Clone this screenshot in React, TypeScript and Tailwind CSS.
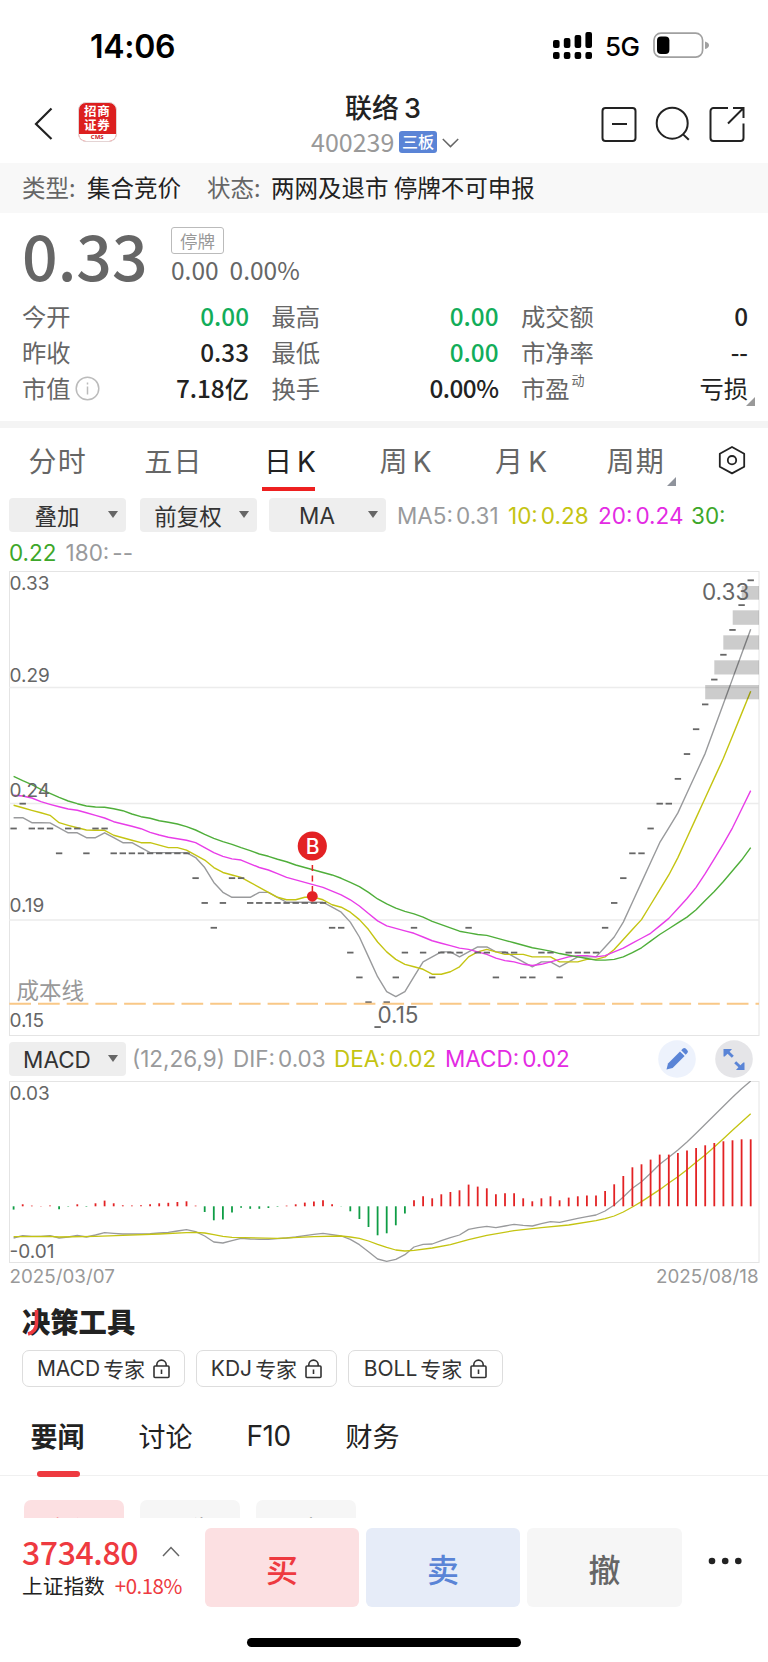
import clsx from "clsx";

// Price level of each daily bar: 0 = 0.33, 18 = 0.15
const levels = [
  10, 9, 10, 10, 10, 11, 10, 10, 11, 10, 10, 11, 11, 11, 11, 11, 11, 11, 11, 11,
  12, 13, 14, 13, 12, 12, 13, 13, 13, 13, 13, 13, 13, 13, 13, 14, 14, 15, 16, 17,
  18, 17, 16, 15, 14, 15, 16, 15, 15, 15, 14, 15, 15, 16, 15, 15, 16, 16, 15, 15,
  16, 15, 15, 15, 15, 14, 13, 12, 11, 11, 10, 9, 9, 8, 7, 6, 5, 4, 3, 2, 1, 0,
];

// Averages for the first days, whose window starts before the visible range
const lead5 = [817.7, 817.7, 822.7, 822.7];
const lead10 = [805.3, 807.7, 810.3, 812.7, 815.3, 822.7, 825.3, 827.7, 830];
const lead20 = [
  795.3, 796, 798, 801.7, 804.3, 806.7, 809, 810.3, 812.7, 815.3, 818, 821.7, 824,
  826.3, 828.7, 832.3, 835, 837.3, 838.7,
];
const lead30 = [
  776.3, 780.7, 784.7, 789.3, 793.3, 797.3, 801, 803.7, 806, 807, 807.3, 808.7,
  810.7, 814, 816.7, 818.3, 820.7, 822.3, 824, 826.7, 830, 834.3, 838.3, 841.7,
  844.3, 847.7, 850.7, 854, 856.3,
];

const histogram = [
  -3.3, 2, 0.7, 0.3, 0.7, -3, -0.4, 2, -0.5, 3, 5.7, 3, 1, 0.7, 1, 2, 3, 3.5, 4.3, 5,
  0.7, -5.7, -14, -13.3, -6.3, -1.5, -2.5, -2.5, -1.7, -0.5, 0.7, 2, 3.7, 4.7, 6, 2,
  -0.2, -5, -12.7, -20.7, -29, -27, -19, -7.3, 6, 10, 8, 12, 14.3, 16, 21.7, 19.7,
  18, 12, 13, 13, 8, 5, 8, 10, 6, 8.7, 10, 10.7, 10.7, 15.3, 22, 30.3, 39, 42, 46.7,
  51.7, 51.7, 53.3, 55.7, 58.3, 61, 63.3, 65, 66, 67, 67,
];

const dif = [
  609, 602, 604, 604, 602, 609, 606, 601, 606, 600, 593, 595, 597, 597, 597, 596,
  594, 592, 588, 584, 590, 603, 621, 624, 617, 610, 612, 613, 613, 611, 609, 606,
  602, 598, 595, 599, 603, 613, 629, 650, 672, 679, 673, 659, 636, 628, 627, 617,
  608, 600, 583, 578, 574, 578, 573, 568, 571, 573, 566, 560, 562, 556, 550, 545,
  540, 528, 510, 486, 460, 440, 415, 388, 367, 345, 321, 295, 268, 241, 214, 187,
  161, 138,
];

const dea: [number, number][] = [
  [0, 605], [4, 604], [5, 606], [9, 604], [12, 601], [16, 597], [19, 593], [20, 592],
  [21, 594], [22, 599], [23, 604], [24, 607], [29, 610], [33, 605], [36, 603],
  [37, 606], [38, 610], [39, 618], [40, 628], [41, 637], [42, 645], [43, 648],
  [44, 646], [46, 639], [48, 629], [50, 614], [52, 601], [55, 587], [58, 578],
  [61, 570], [64, 557], [65, 551], [66, 543], [67, 531], [68, 516], [69, 500],
  [70, 482], [71, 464], [72, 444], [73, 425], [74, 404], [75, 382], [76, 360],
  [77, 336], [78, 311], [79, 286], [80, 261], [81, 236],
];

const dayX = (i: number) => 13.6 + i * 9.1;
const levelY = (k: number) => 580.3 + k * 24.82;
const macdY = (v: number) => 1035 + v / 3;

const average = (size: number, lead: number[]) =>
  levels
    .map((_, i) => {
      if (i < size - 1) return `${dayX(i)},${lead[i]}`;
      const slice = levels.slice(i - size + 1, i + 1);
      const mean = slice.reduce((a, b) => a + b, 0) / size;
      return `${dayX(i)},${levelY(mean) - 0.7}`;
    })
    .join(" ");

const averages = [
  { points: average(5, lead5), color: "#999a9c" },
  { points: average(10, lead10), color: "#c4c412" },
  { points: average(20, lead20), color: "#e83de8" },
  { points: average(30, lead30), color: "#4fae3a" },
];

const gaps = [
  [741.7, 586, 13.7],
  [732.7, 610.3, 14.5],
  [723.3, 635.3, 14.3],
  [714.3, 660.3, 14.2],
  [705.2, 685, 14.3],
];

const StatusBar = () => (
  <div className="h-[82px] flex items-start pl-[90px] pr-[58px] font-['Inter',sans-serif] text-black">
    <span className="w-[90px] mt-[27px] text-[32px] leading-[39px] font-semibold tracking-[-0.300px]">14:06</span>
    <svg className="ml-auto mt-[32px]" width="40" height="27" viewBox="0 0 40 27">
      {[8, 6, 3, 0].map((top, i) => (
        <g key={top}>
          <rect x={i * 10.8} y={top} width="6.6" height={16 - top} rx="2" />
          <rect x={i * 10.8} y="20" width="6.6" height="7" rx="2" />
        </g>
      ))}
    </svg>
    <span className="ml-[12px] mt-[31px] w-[36px] text-[26px] leading-[32px] font-medium tracking-[-0.600px]">5G</span>
    <svg className="ml-[12px] mt-[32px]" width="57" height="27" viewBox="0 0 57 27">
      <rect x="1" y="1.2" width="48.6" height="24" rx="7" fill="none" stroke="#a0a0a0" strokeWidth="1.7" />
      <rect x="4" y="4.6" width="12.4" height="17.4" rx="4" />
      <path d="M52 9.500c2.600.700 4 2 4 3.800s-1.400 3.100-4 3.800z" fill="#a0a0a0" />
    </svg>
  </div>
);

const Header = () => (
  <header className="h-[81px] flex items-start">
    <svg className="ml-[33px] mt-[24px]" width="20" height="34" viewBox="0 0 20 34" fill="none" stroke="#222" strokeWidth="2.200">
      <path d="M18.500 2.500 3 18 18.500 33" />
    </svg>
    <div className="ml-[24.500px] mt-[20px] w-[39.500px] h-[40px] rounded-[8px] overflow-hidden border border-[#e4d4d4] bg-[#dc1f1f] text-white flex flex-col items-center">
      <span className="mt-[1px] h-[14px] text-[12.500px] leading-[14px] font-bold tracking-[0.800px]">招商</span>
      <span className="h-[14px] text-[12.500px] leading-[14px] font-bold tracking-[0.800px]">证券</span>
      <span className="mt-auto w-full h-[7px] bg-white text-[#c22] text-[6px] leading-[6px] font-bold text-center font-['Open_Sans',sans-serif]">CMS</span>
    </div>
    <div className="w-[394px] pl-[22px] flex flex-col">
      <div className="ml-[206px] mt-[9px] text-[27px] leading-[32px] text-[#222] font-medium whitespace-nowrap">
        联络<span className="ml-[5px] font-['Inter',sans-serif]">3</span>
      </div>
      <div className="ml-[172px] mt-[5px] flex items-center h-[26px]">
        <span className="-mt-[4px] w-[84px] text-[25px] leading-[26px] text-[#999]">400239</span>
        <span className="ml-[4px] -mt-[2px] w-[38px] h-[22px] rounded-[3px] bg-[#5a84d6] text-white text-[16px] leading-[21px] text-center font-medium">三板</span>
        <svg className="ml-[5px]" width="17" height="10" viewBox="0 0 17 10" fill="none" stroke="#666" strokeWidth="1.500">
          <path d="m.8 1 7.700 7.600L16.200 1" />
        </svg>
      </div>
    </div>
    <div className="ml-auto mr-[23px] mt-[24px] flex gap-[18px]">
      <svg width="36" height="36" viewBox="0 0 36 36" fill="none" stroke="#222" strokeWidth="2">
        <rect x="1.500" y="2" width="33" height="33" rx="3" />
        <path d="M11 18h15" />
      </svg>
      <svg width="36" height="36" viewBox="0 0 36 36" fill="none" stroke="#222" strokeWidth="2">
        <circle cx="17.200" cy="17.200" r="15.500" />
        <path d="m27.800 28.100 6 5.700" />
      </svg>
      <svg width="36" height="36" viewBox="0 0 36 36" fill="none" stroke="#222" strokeWidth="2">
        <path d="M19 2H4.500a3 3 0 0 0-3 3v27a3 3 0 0 0 3 3h27a3 3 0 0 0 3-3V17.500M24 2h10.500v10M34 2.500 19 17.500" />
      </svg>
    </div>
  </header>
);

const stats = [
  [["今开", "0.00", true], ["最高", "0.00", true], ["成交额", "0", false]],
  [["昨收", "0.33", false], ["最低", "0.00", true], ["市净率", "--", false]],
  [["市值", "7.18亿", false], ["换手", "0.00%", false], ["市盈", "亏损", false]],
] as [string, string, boolean][][];

const Quote = () => (
  <section className="relative h-[208px] pt-[14px]">
    <div className="flex h-[70px] pl-[22px]">
      <span className="w-[149px] text-[62.500px] leading-[54px] font-medium text-[#666]">0.33</span>
      <div className="flex flex-col">
        <span className="w-[53px] h-[27px] border border-[#bbb] rounded-[3px] text-[17.500px] leading-[25px] text-center text-[#999]">停牌</span>
        <span className="mt-[2px] text-[24.500px] leading-[28px] text-[#666] whitespace-pre"><span className="mr-[11px]">0.00</span>0.00%</span>
      </div>
    </div>
    <div className="mt-px pl-[22px] pr-[20px] flex flex-col">
      {stats.map((row, r) => (
        <div key={r} className="grid grid-cols-3 gap-[22.500px] h-[36px]">
          {row.map(([label, value, up]) => (
            <div key={label} className="flex items-center text-[24.300px] leading-[36px] text-[#666] whitespace-nowrap">
              <span>{label}</span>
              {label === "市值" && (
                <svg className="ml-[4px]" width="25" height="25" viewBox="0 0 25 25" fill="none" stroke="#bbb" strokeWidth="1.500">
                  <circle cx="12.500" cy="12.500" r="11.300" />
                  <path d="M12.500 10.500v8M12.500 6.500v2" />
                </svg>
              )}
              {label === "市盈" && <sup className="ml-[2px] -top-[9px] text-[13px] leading-none">动</sup>}
              <span className={clsx("ml-auto", up ? "text-[#12ad5a]" : "text-[#222]", /\d|-/.test(value) && "font-medium", value.includes("%") && "tracking-[-0.500px]")}>{value}</span>
            </div>
          ))}
        </div>
      ))}
    </div>
    <svg className="absolute right-[13px] top-[184px]" width="9" height="9" viewBox="0 0 9 9" fill="#999">
      <path d="M9 0v9H0z" />
    </svg>
  </section>
);

const periods = ["分时", "五日", "日K", "周K", "月K", "周期"];

const PeriodTabs = () => (
  <nav className="flex h-[70px]">
    {periods.map((p) => {
      const active = p === "日K";
      return (
        <div key={p} className={clsx("relative w-[115.600px] flex flex-col items-center text-[28px] leading-[40px]", active ? "text-[#222]" : "text-[#666]")}>
          <span className={clsx("mt-[12px] h-[40px] tracking-[1.200px]", p[1] === "K" && "pl-[3px]")}>
            {p[0]}
            {p[1] === "K" ? <span className="ml-[4px] font-['Inter',sans-serif]">K</span> : p[1]}
          </span>
          {active && <span className="mt-[7px] h-[4px] w-[53px] bg-[#ee2020]" />}
          {p === "周期" && (
            <svg className="absolute left-[89px] top-[49px]" width="9" height="9" viewBox="0 0 9 9" fill="#8f939c">
              <path d="M9 0v9H0z" />
            </svg>
          )}
        </div>
      );
    })}
    <svg className="ml-[24px] mt-[17px]" width="28" height="30" viewBox="0 0 28 30" fill="none" stroke="#222" strokeWidth="1.800" strokeLinejoin="round">
      <path d="M14 2 26.200 8.700v13L14 28.400 1.800 21.700v-13z" />
      <circle cx="14" cy="15.200" r="4.200" />
    </svg>
  </nav>
);

const Dropdown = ({ label, latin }: { label: string; latin?: boolean }) => (
  <button className="relative w-[117px] h-[34px] shrink-0 rounded-[4px] bg-[#eee] text-[#333] text-[22.500px]">
    <span className={clsx("block pr-[21px]", latin ? "leading-[35px] font-['Inter',sans-serif]" : "leading-[32px]")}>{label}</span>
    <svg className="absolute right-[8px] top-[13px]" width="10" height="7" viewBox="0 0 10 7" fill="#666">
      <path d="M0 0h10L5 7z" />
    </svg>
  </button>
);

const PriceChart = () => (
  <svg className="block font-['Inter','Noto_Sans_CJK_SC',sans-serif]" width="768" height="466" viewBox="0 571 768 466" fill="none">
    <rect x="9.500" y="571.500" width="749.500" height="464" stroke="#e4e4e4" />
    <path d="M9 687.500h750M9 803.500h750M9 920h750" stroke="#ececec" strokeWidth="1.300" />
    {averages.map((a) => (
      <polyline key={a.color} points={a.points} stroke={a.color} strokeWidth="1.400" strokeLinejoin="round" />
    ))}
    {levels.map((k, i) => (
      <path key={i} d={`M${dayX(i) - 3.2} ${levelY(k)}h6.400`} stroke="#666" strokeWidth="1.800" />
    ))}
    {gaps.map(([x, y, h]) => (
      <rect key={x} x={x} y={y} width={759 - x} height={h} fill="#000" fillOpacity="0.200" />
    ))}
    <path d="M9.300 1003.800H759" stroke="#f9c887" strokeWidth="2" strokeDasharray="21.700 7" />
    <path d="M312.400 865v26" stroke="#e32224" strokeWidth="1.500" strokeDasharray="6 4.500" />
    <circle cx="312.300" cy="896.300" r="5.400" fill="#e32224" />
    <circle cx="312.300" cy="846" r="14.600" fill="#e32224" />
    <text x="312.600" y="854" fontSize="21" fontWeight="500" fill="#fff" textAnchor="middle">B</text>
    <g fill="#666" fontSize="19">
      <text x="9.500" y="590.300">0.33</text>
      <text x="9.500" y="682">0.29</text>
      <text x="9.500" y="797">0.24</text>
      <text x="9.500" y="912">0.19</text>
      <text x="9.500" y="1026.700">0.15</text>
    </g>
    <g fill="#666" fontSize="22.500">
      <text x="702" y="599.500">0.33</text>
      <text x="377.500" y="1022.500">0.15</text>
    </g>
    <text x="16.500" y="998.500" fontSize="22.500" fill="#999">成本线</text>
  </svg>
);

const MacdChart = () => (
  <svg className="block font-['Inter',sans-serif]" width="768" height="210" viewBox="0 1081 768 210" fill="none">
    <rect x="9.500" y="1081.500" width="749.500" height="181" stroke="#e4e4e4" />
    <polyline points={dif.map((v, i) => `${dayX(i)},${macdY(v)}`).join(" ")} stroke="#999a9c" strokeWidth="1.300" strokeLinejoin="round" />
    <polyline points={dea.map(([i, v]) => `${dayX(i)},${macdY(v)}`).join(" ")} stroke="#c4c412" strokeWidth="1.300" strokeLinejoin="round" />
    {histogram.map((h, i) => (
      <path key={i} d={`M${dayX(i)} 1206.300v${-h}`} stroke={h > 0 ? "#e32224" : "#0f9d45"} strokeWidth="1.800" />
    ))}
    <g fontSize="19" fill="#666">
      <text x="9.500" y="1099.700">0.03</text>
      <text x="9.500" y="1258">-0.01</text>
    </g>
    <g fontSize="18.800" fill="#999">
      <text x="9.500" y="1283">2025/03/07</text>
      <text x="758.500" y="1283" textAnchor="end">2025/08/18</text>
    </g>
  </svg>
);

const Lock = () => (
  <svg className="ml-[8px]" width="17" height="20" viewBox="0 0 17 20" fill="none" stroke="#333" strokeWidth="1.600">
    <rect x="1" y="7" width="15" height="11.500" rx="1" />
    <path d="M3.800 7V5.800a4.700 4.700 0 0 1 9.400 0V7M8.500 10.500v4.500" />
  </svg>
);

const experts = [
  { name: "MACD", className: "w-[163px]" },
  { name: "KDJ", className: "w-[141px]" },
  { name: "BOLL", className: "w-[155px]" },
];

const Tools = () => (
  <section className="h-[104px] pl-[22px] pt-[11px]">
    <h2 className="relative h-[38px] text-[28.300px] leading-[38px] font-black text-[#222]">
      决策工具
      {/* red stroke of the wordmark */}
      <svg className="absolute left-[4px] top-[7px]" width="16" height="28" viewBox="0 0 16 28" fill="none" stroke="#ee3a40" strokeWidth="3.600">
        <path d="M10.500 1v13c0 6.500-3 9.500-8.500 11" />
      </svg>
    </h2>
    <div className="mt-[10px] flex gap-[11px]">
      {experts.map((e) => (
        <div key={e.name} className={clsx("h-[37px] shrink-0 flex items-center justify-center rounded-[7px] border border-[#ddd] text-[21px] leading-[35px] text-[#333]", e.className)}>
          <span className="font-['Inter',sans-serif] mr-[3px]">{e.name}</span>专家
          <Lock />
        </div>
      ))}
    </div>
  </section>
);

const News = () => (
  <section className="h-[123px]">
    <div className="relative h-[81px] border-b border-[#f0f0f0] flex pl-[30.500px] text-[27px] leading-[40px] text-[#222]">
      <span className="mt-[21px] w-[108px] font-bold">要闻</span>
      <span className="mt-[21px] w-[108px]">讨论</span>
      <span className="mt-[21px] w-[99px] text-[28px] font-['Inter',sans-serif] tracking-[-0.500px]">F10</span>
      <span className="mt-[21px]">财务</span>
      <span className="absolute left-[37px] bottom-[-2px] w-[43px] h-[6px] rounded-full bg-[#ee3a40]" />
    </div>
    <div className="mt-[24px] ml-[24px] h-[18px] overflow-hidden flex gap-[16px] text-[22px] leading-[28px] text-center">
      <span className="w-[100px] h-[40px] pt-[12px] rounded-[7px] bg-[#fce0e2] text-[#ee3a40]">新闻</span>
      <span className="w-[100px] h-[40px] pt-[12px] rounded-[7px] bg-[#f6f6f6] text-[#666]">公告</span>
      <span className="w-[100px] h-[40px] pt-[12px] rounded-[7px] bg-[#f6f6f6] text-[#666]">研报</span>
    </div>
  </section>
);

const TradeBar = () => (
  <footer className="relative h-[144px] pt-[10px] flex">
    <div className="w-[205px] pl-[22px] flex flex-col">
      <div className="flex items-start">
        <span className="mt-[3px] w-[118px] text-[32px] leading-[40px] font-medium tracking-[-0.400px] text-[#ee3a40] whitespace-nowrap">3734.80</span>
        <svg className="ml-[22px] mt-[18px]" width="18" height="11" viewBox="0 0 18 11" fill="none" stroke="#666" strokeWidth="1.500">
          <path d="m1 10 8-8.500 8 8.500" />
        </svg>
      </div>
      <div className="flex text-[20.700px] leading-[28px] text-[#222] whitespace-nowrap">
        上证指数<span className="ml-[10px] text-[20.500px] tracking-[-0.500px] text-[#ee3a40]">+0.18%</span>
      </div>
    </div>
    <div className="flex gap-[7px] text-[32px] leading-[78px] font-medium text-center">
      <button className="w-[154px] h-[79px] rounded-[6px] bg-[#fce0e2] text-[#ee3a40]">买</button>
      <button className="w-[154px] h-[79px] rounded-[6px] bg-[#e6ecf8] text-[#5a84d6]">卖</button>
      <button className="w-[155px] h-[79px] rounded-[6px] bg-[#f6f6f6] text-[#666]">撤</button>
    </div>
    <svg className="ml-[25px] mt-[29px]" width="36" height="8" viewBox="0 0 36 8" fill="#222">
      <circle cx="5" cy="4" r="3.300" />
      <circle cx="18.200" cy="4" r="3.300" />
      <circle cx="31.300" cy="4" r="3.300" />
    </svg>
    <span className="absolute left-[247px] bottom-[15px] w-[274px] h-[9px] rounded-full bg-black" />
  </footer>
);

export default function App() {
  return (
    <div className="w-[768px] h-[1662px] overflow-hidden bg-white font-['Noto_Sans_CJK_SC',sans-serif]">
      <StatusBar />
      <Header />
      <div className="h-[50px] bg-[#f8f8f8] pl-[22px] flex items-start text-[23.500px] leading-[48px] text-[#222] whitespace-nowrap">
        <span className="w-[65px] text-[#666]">类型:</span>
        <span className="w-[120px]">集合竞价</span>
        <span className="w-[64px] text-[#666]">状态:</span>
        <span>两网及退市 停牌不可申报</span>
      </div>
      <Quote />
      <div className="h-[7px] bg-[#f4f4f4]" />
      <PeriodTabs />

      <div className="h-[73px] pl-[9px] font-['Inter',sans-serif] text-[22.500px]">
        <div className="flex items-start leading-[35px] whitespace-nowrap">
          <div className="flex font-['Noto_Sans_CJK_SC',sans-serif]">
            <Dropdown label="叠加" />
            <span className="w-[14px]" />
            <Dropdown label="前复权" />
            <span className="w-[12px]" />
            <Dropdown label="MA" latin />
          </div>
          <span className="ml-[11px] w-[111px] text-[#999a9c]">MA5:<span className="ml-[3px]">0.31</span></span>
          <span className="w-[90px] text-[#c4c412]">10:<span className="ml-[3px]">0.28</span></span>
          <span className="w-[93px] text-[#e32be3]">20:<span className="ml-[3px]">0.24</span></span>
          <span className="text-[#3da72a]">30:</span>
        </div>
        <div className="mt-[2px] leading-[35px]">
          <span className="text-[#3da72a]">0.22</span>
          <span className="ml-[9px] text-[#999a9c]">180:<span className="ml-[3px]">--</span></span>
        </div>
      </div>

      <PriceChart />

      <div className="h-[44px] pt-[5px] pl-[9px] pr-[15px] flex items-start font-['Inter',sans-serif] text-[22.500px] leading-[34px] whitespace-nowrap">
        <Dropdown label="MACD" latin />
        <span className="ml-[6px] w-[101px] text-[#999a9c]">(12,26,9)</span>
        <span className="w-[101px] text-[#999a9c]">DIF:<span className="ml-[3px]">0.03</span></span>
        <span className="w-[111px] text-[#c4c412]">DEA:<span className="ml-[3px]">0.02</span></span>
        <span className="text-[#e32be3]">MACD:<span className="ml-[3px]">0.02</span></span>
        <div className="ml-auto -mt-[2px] flex gap-[19px]">
          <svg width="38" height="38" viewBox="0 0 38 38">
            <circle cx="19" cy="19" r="18.800" fill="#edf2fc" />
            <g fill="#5a84d6">
              <path d="M8.500 29.500 10 23.500 22 11.500l4.600 4.600-12 12z" />
              <path d="m23.200 10.300 1.700-1.700a2 2 0 0 1 2.800 0l1.600 1.600a2 2 0 0 1 0 2.800l-1.600 1.700z" />
            </g>
          </svg>
          <svg width="38" height="38" viewBox="0 0 38 38">
            <circle cx="19" cy="19" r="18.800" fill="#e5e5e8" />
            <g fill="#5a84d6">
              <path d="M8.500 9H17l-2.400 2.700 4.200 4.100-2 2-4.200-4.100-2.900 2.800H8.500z" />
              <path d="M29.500 30H21l2.400-2.700-4.200-4.100 2-2 4.200 4.100 2.900-2.800h1.200z" />
            </g>
          </svg>
        </div>
      </div>

      <MacdChart />
      <Tools />
      <News />
      <TradeBar />
    </div>
  );
}
